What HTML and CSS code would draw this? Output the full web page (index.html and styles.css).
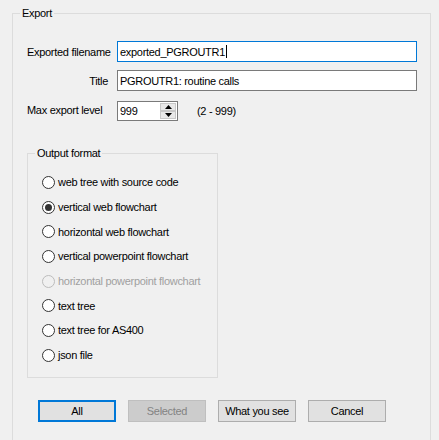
FILE: index.html
```html
<!DOCTYPE html>
<html>
<head>
<meta charset="utf-8">
<link rel="stylesheet" href="styles.css">
</head>
<body>
<fieldset class="group export">
  <legend>Export</legend>
  <div class="form">
    <label class="lbl">Exported filename</label>
    <div class="field"><span class="input focused">exported_PGROUTR1<span class="caret"></span></span></div>
    <label class="lbl right">Title</label>
    <div class="field"><span class="input">PGROUTR1: routine calls</span></div>
    <label class="lbl">Max export level</label>
    <div class="field spinrow">
      <span class="spinner">
        <span class="spinval">999</span>
        <span class="spinbtns">
          <span class="sb up"><svg width="7" height="4" viewBox="0 0 7 4"><path d="M3.5 0 L7 4 L0 4 Z" fill="#000"/></svg></span>
          <span class="sb down"><svg width="7" height="4" viewBox="0 0 7 4"><path d="M0 0 L7 0 L3.5 4 Z" fill="#000"/></svg></span>
        </span>
      </span>
      <span class="range">(2 - 999)</span>
    </div>
  </div>

  <fieldset class="group output">
    <legend>Output format</legend>
    <div class="radios">
      <div class="radio"><span class="circle"></span>web tree with source code</div>
      <div class="radio checked"><span class="circle"></span>vertical web flowchart</div>
      <div class="radio"><span class="circle"></span>horizontal web flowchart</div>
      <div class="radio"><span class="circle"></span>vertical powerpoint flowchart</div>
      <div class="radio disabled"><span class="circle"></span>horizontal powerpoint flowchart</div>
      <div class="radio"><span class="circle"></span>text tree</div>
      <div class="radio"><span class="circle"></span>text tree for AS400</div>
      <div class="radio"><span class="circle"></span>json file</div>
    </div>
  </fieldset>

  <div class="buttons">
    <span class="btn default">All</span>
    <span class="btn disabled">Selected</span>
    <span class="btn">What you see</span>
    <span class="btn">Cancel</span>
  </div>
</fieldset>
</body>
</html>
```
FILE: styles.css
```css
html, body {
  margin: 0;
  padding: 0;
  background: #f0f0f0;
  height: 440px;
  overflow: hidden;
}
body {
  font-family: "Liberation Sans", Arial, sans-serif;
  font-size: 11px;
  letter-spacing: -0.3px;
  color: #000;
  padding: 7px 0 0 12px;
  box-sizing: border-box;
}
.group {
  border: 1px solid #dcdcdc;
  margin: 0;
  padding: 0;
  min-width: 0;
}
.group legend {
  padding: 0 2px;
  margin-left: 7px;
  line-height: 13px;
  height: 13px;
}
.export {
  width: 419px;
  height: 433px;
  box-sizing: border-box;
  border-bottom-width: 0;
}
.form {
  display: grid;
  grid-template-columns: 84px 300px;
  column-gap: 6px;
  row-gap: 8px;
  margin: 21px 0 0 14px;
  align-items: center;
}
.form .lbl { white-space: nowrap; }
.form .right { justify-self: end; margin-right: 3px; }
.input {
  display: flex;
  align-items: center;
  height: 21px;
  box-sizing: border-box;
  border: 1px solid #7a7a7a;
  background: #fff;
  padding-left: 2px;
  white-space: nowrap;
}
.input.focused { border-color: #0078d7; }
.caret {
  display: inline-block;
  width: 1px;
  height: 13px;
  background: #000;
  margin-left: 1px;
}
.spinrow {
  display: flex;
  align-items: center;
  margin-top: 2px;
}
.spinner {
  display: flex;
  width: 61px;
  height: 20px;
  box-sizing: border-box;
  border: 1px solid #7a7a7a;
  background: #fff;
}
.spinval {
  flex: 1;
  padding-left: 2px;
  line-height: 18px;
}
.spinbtns {
  display: flex;
  flex-direction: column;
  width: 16px;
  padding: 1px 1px 1px 0;
}
.sb {
  flex: 1;
  display: flex;
  align-items: center;
  justify-content: center;
  background: #e8e8e8;
  border: 1px solid #c8c8c8;
  box-sizing: border-box;
}
.range { margin-left: 19px; }

.output {
  width: 191px;
  height: 231px;
  box-sizing: border-box;
  margin: 26px 0 0 14px;
}
.radios {
  display: flex;
  flex-direction: column;
  margin: 10px 0 0 14px;
}
.radio {
  display: flex;
  align-items: center;
  height: 24.7px;
  white-space: nowrap;
}
.circle {
  width: 13px;
  height: 13px;
  box-sizing: border-box;
  border: 1px solid #333;
  border-radius: 50%;
  background: #fff;
  margin-right: 3px;
  display: flex;
  align-items: center;
  justify-content: center;
}
.radio.checked .circle::after {
  content: "";
  width: 7px;
  height: 7px;
  border-radius: 50%;
  background: #333;
}
.radio.disabled { color: #a0a0a0; }
.radio.disabled .circle { border-color: #bcbcbc; background: #f0f0f0; }

.buttons {
  display: flex;
  gap: 12px;
  margin: 22px 0 0 25px;
}
.btn {
  width: 78px;
  height: 22px;
  box-sizing: border-box;
  border: 1px solid #adadad;
  background: #e1e1e1;
  display: flex;
  align-items: center;
  justify-content: center;
}
.btn.default { border: 2px solid #0078d7; }
.btn.disabled { background: #cccccc; border-color: #bfbfbf; color: #838383; }
```
